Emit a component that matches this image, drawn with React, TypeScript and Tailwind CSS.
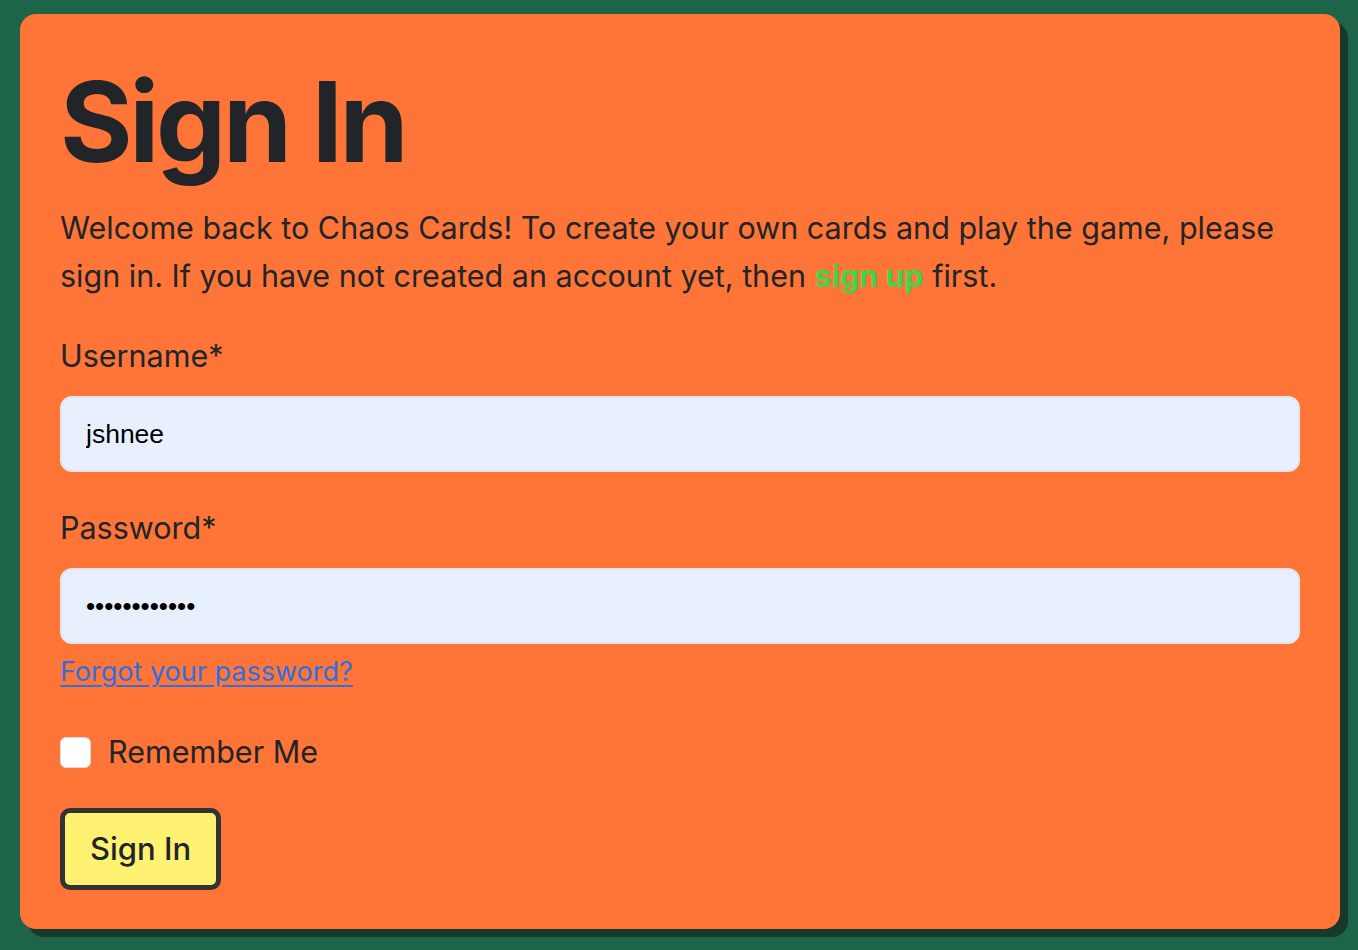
import { useState } from "react";

export default function App() {
  const [username, setUsername] = useState("jshnee");
  const [password, setPassword] = useState("jshneepass12");
  const [remember, setRemember] = useState(false);

  return (
    <div
      className="min-h-screen bg-[#1e6448] pt-[14px] pl-[20px] pr-[18px]"
      style={{ fontFamily: "Inter, 'Noto Sans', sans-serif" }}
    >
      <div className="bg-[#fe7537] rounded-[16px] shadow-[8px_8px_0_#15392a] px-[40px] pt-[41px] pb-[39px] text-[#212529]">
        <h1 className="text-[111px] leading-[1.2] font-bold tracking-[-0.03em] mb-[16px]">
          Sign In
        </h1>
        <p className="text-[30.5px] leading-[48px] mb-[32px]">
          Welcome back to Chaos Cards! To create your own cards and play the
          game, please sign in. If you have not created an account yet, then{" "}
          <a href="#" className="text-[#3fd44a] font-bold no-underline">
            sign up
          </a>{" "}
          first.
        </p>
        <form onSubmit={(e) => e.preventDefault()}>
          <div className="mb-[32px]">
            <label htmlFor="username" className="block text-[30.5px] leading-[48px] mb-[16px]">
              Username*
            </label>
            <input
              id="username"
              type="text"
              value={username}
              onChange={(e) => setUsername(e.target.value)}
              className="block w-full h-[76px] rounded-[12px] border-2 border-[#e3e6ea] bg-[#e8f0fe] px-[24px] text-[26.5px] text-black font-['Liberation_Sans',Arial,sans-serif] focus:outline-none"
            />
          </div>
          <div>
            <label htmlFor="password" className="block text-[30.5px] leading-[48px] mb-[16px]">
              Password*
            </label>
            <input
              id="password"
              type="password"
              value={password}
              onChange={(e) => setPassword(e.target.value)}
              className="block w-full h-[76px] rounded-[12px] border-2 border-[#e3e6ea] bg-[#e8f0fe] px-[24px] text-[26px] text-black font-['Liberation_Sans',Arial,sans-serif] focus:outline-none"
            />
          </div>
          <div className="mt-[4px] mb-[32px] h-[48px] text-[27px] leading-[48px]">
            <a href="#" className="text-[#2f6fe0] underline underline-offset-[4px]">
              Forgot your password?
            </a>
          </div>
          <div className="flex items-center gap-[17px] mb-[32px] h-[48px]">
            <input
              id="remember"
              type="checkbox"
              checked={remember}
              onChange={(e) => setRemember(e.target.checked)}
              className="appearance-none w-[31px] h-[31px] rounded-[6px] bg-white border border-[#d7d9dc]"
            />
            <label htmlFor="remember" className="text-[30.5px] leading-[48px]">
              Remember Me
            </label>
          </div>
          <button
            type="submit"
            className="block h-[82px] px-[25px] bg-[#fff172] border-[5px] border-[#333333] rounded-[10px] text-[31px] leading-[48px] font-medium text-[#212529]"
          >
            Sign In
          </button>
        </form>
      </div>
    </div>
  );
}
